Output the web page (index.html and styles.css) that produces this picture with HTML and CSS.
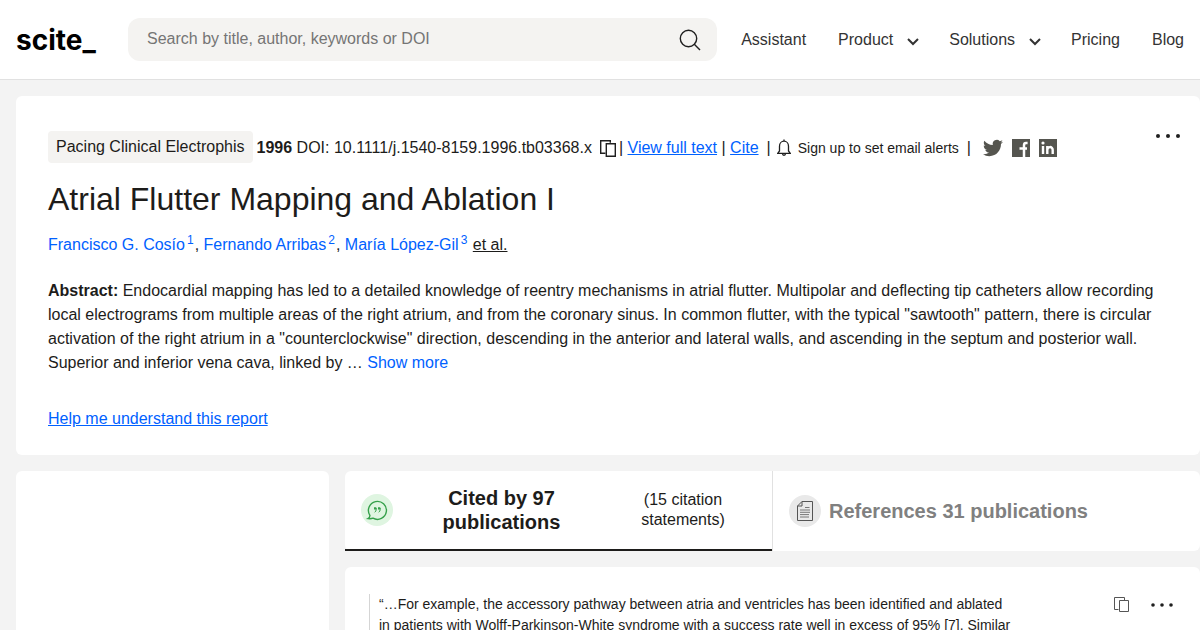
FILE: index.html
```html
<!DOCTYPE html>
<html lang="en">
<head>
<meta charset="utf-8">
<title>Atrial Flutter Mapping and Ablation I - scite</title>
<link rel="stylesheet" href="styles.css">
</head>
<body>
<header class="header">
  <a class="logo" href="#">scite_</a>
  <form class="search">
    <input class="search-input" type="text" aria-label="Search" placeholder="Search by title, author, keywords or DOI">
    <button class="icon-button" type="button" aria-label="Search">
      <svg width="22" height="22" viewBox="0 0 22 22" fill="none" stroke="#1f1f1f" stroke-width="1.4"><circle cx="9.5" cy="9.5" r="8.2"/><path d="M15.3 15.3L21 21"/></svg>
    </button>
  </form>
  <nav class="nav">
    <a href="#">Assistant</a>
    <button class="nav-menu" type="button">Product <svg width="12" height="8" viewBox="0 0 12 8" fill="none" stroke="#333" stroke-width="2"><path d="M1 1l5 5 5-5"/></svg></button>
    <button class="nav-menu" type="button">Solutions <svg width="12" height="8" viewBox="0 0 12 8" fill="none" stroke="#333" stroke-width="2"><path d="M1 1l5 5 5-5"/></svg></button>
    <a href="#">Pricing</a>
    <a href="#">Blog</a>
  </nav>
</header>
<main class="page">
  <section class="card report">
    <div class="report-top">
      <div class="meta">
        <span class="journal">Pacing Clinical Electrophis</span>
        <span class="doi"><b>1996</b> DOI: 10.1111/j.1540-8159.1996.tb03368.x</span>
        <button class="icon-button copy" type="button" aria-label="Copy DOI">
          <svg width="17" height="17" viewBox="0 0 17 17" fill="none" stroke="#1f1f1f" stroke-width="1.4"><path d="M5.500 13.300H.7V.7h9.600v2"/><path d="M6.300 3.700h9v12.600h-9z"/></svg>
        </button>
        <span class="links">| <a href="#">View full text</a> | <a href="#">Cite</a></span>
        <span class="bar">|</span>
        <button class="alerts" type="button">
          <svg width="14" height="18" viewBox="0 0 14 18" fill="none" stroke="#1f1f1f" stroke-width="1.3"><path d="M.7 14.300h12.600L11.500 12V7.200a4.500 5 0 0 0-9 0V12zM7 .5v2M5.500 14.500a1.500 1.800 0 0 0 3 0"/></svg>
          Sign up to set email alerts
        </button>
        <span class="bar">|</span>
        <span class="social">
          <a href="#" aria-label="Twitter"><svg width="20" height="20" viewBox="0 0 24 24" fill="#55554f"><path d="M23.950 4.570a10 10 0 0 1-2.820.77 4.960 4.960 0 0 0 2.160-2.720c-.95.56-2 .96-3.130 1.180a4.920 4.920 0 0 0-8.380 4.480C7.690 8.100 4.070 6.130 1.640 3.160a4.820 4.820 0 0 0-.67 2.480c0 1.710.87 3.210 2.190 4.100a4.900 4.900 0 0 1-2.230-.62v.06a4.920 4.920 0 0 0 3.950 4.830 5 5 0 0 1-2.210.08 4.940 4.940 0 0 0 4.600 3.420A9.870 9.870 0 0 1 0 19.540a13.990 13.990 0 0 0 7.560 2.210c9.050 0 14-7.500 14-13.980 0-.21 0-.42-.02-.63a9.940 9.940 0 0 0 2.410-2.570z"/></svg></a>
          <a href="#" aria-label="Facebook"><svg width="18" height="18" viewBox="0 0 18 18"><path fill="#55554f" d="M0 0h18v18H0z"/><path d="M15.600 4h-1.600c-1.500 0-2 .8-2 2.200V18M7.500 9.500h7.500" fill="none" stroke="#fff" stroke-width="2.500"/></svg></a>
          <a href="#" aria-label="LinkedIn"><svg width="18" height="18" viewBox="0 0 18 18"><path fill="#55554f" d="M0 0h18v18H0z"/><path d="M4 7v8M8.300 7v8M8.300 11c0-3.800 5.400-4 5.400 0v4" fill="none" stroke="#fff" stroke-width="2.400"/><circle cx="4" cy="4" r="1.600" fill="#fff"/></svg></a>
        </span>
      </div>
      <button class="icon-button more" type="button" aria-label="More options">
        <svg width="26" height="6" viewBox="0 0 26 6" fill="#1f1f1f"><circle cx="3" cy="3" r="2"/><circle cx="13" cy="3" r="2"/><circle cx="23" cy="3" r="2"/></svg>
      </button>
    </div>
    <h1 class="title">Atrial Flutter Mapping and Ablation I</h1>
    <p class="authors"><a href="#">Francisco G. Cosío<sup>1</sup></a>, <a href="#">Fernando Arribas<sup>2</sup></a>, <a href="#">María López-Gil<sup>3</sup></a> <button class="et-al" type="button">et al.</button></p>
    <p class="abstract"><b>Abstract:</b> Endocardial mapping has led to a detailed knowledge of reentry mechanisms in atrial flutter. Multipolar and deflecting tip catheters allow recording local electrograms from multiple areas of the right atrium, and from the coronary sinus. In common flutter, with the typical "sawtooth" pattern, there is circular activation of the right atrium in a "counterclockwise" direction, descending in the anterior and lateral walls, and ascending in the septum and posterior wall. Superior and inferior vena cava, linked by … <a class="show-more" href="#">Show more</a></p>
    <a class="help" href="#">Help me understand this report</a>
  </section>
  <div class="columns">
    <aside class="card"></aside>
    <div class="content">
      <div class="tabs">
        <button class="tab active" type="button">
          <svg width="32" height="32" viewBox="0 0 32 32" fill="none"><circle cx="16" cy="16" r="16" fill="#dff5e1"/><path d="M8.900 21.300A9 9 0 1 1 12 24.200Q10 25 7 24.600Q9 23.500 8.900 21.300z" stroke="#35a04a" stroke-width="1.400"/><path d="M13 14h2.200v1.500q0 1.800-1.500 2.800M17 14h2.200v1.500q0 1.800-1.500 2.800" stroke="#35a04a" stroke-width="1"/><path d="M13 13.500h2.200v2H13zM17 13.500h2.200v2H17z" fill="#35a04a"/></svg>
          <strong class="tab-title">Cited by 97 publications</strong>
          <span class="tab-note">(15 citation statements)</span>
        </button>
        <button class="tab" type="button">
          <svg width="32" height="32" viewBox="0 0 32 32" fill="none"><circle cx="16" cy="16" r="16" fill="#e9e9e9"/><path d="M13 6.500h10.500v19h-15V11zM13 6.500V11H8.500" stroke="#555" stroke-linejoin="round"/><path d="M16 12.500h4.500M11 15h10M11 17.300h10M11 19.600h9M11 22h9" stroke="#777"/></svg>
          <strong>References 31 publications</strong>
        </button>
      </div>
      <article class="card citation">
        <blockquote class="quote">“…For example, the accessory pathway between atria and ventricles has been identified and ablated in patients with Wolff-Parkinson-White syndrome with a success rate well in excess of 95% [7]. Similar</blockquote>
        <div class="actions">
          <button class="icon-button" type="button" aria-label="Copy statement">
            <svg width="17" height="16" viewBox="0 0 17 16" fill="none" stroke="#555"><path d="M5.500 12.500h-4v-12h10v3"/><path d="M6.500 3.500h9v11h-9z"/></svg>
          </button>
          <button class="icon-button" type="button" aria-label="More options">
            <svg width="24" height="6" viewBox="0 0 24 6" fill="#1f1f1f"><circle cx="3" cy="3" r="1.800"/><circle cx="12" cy="3" r="1.800"/><circle cx="21" cy="3" r="1.800"/></svg>
          </button>
        </div>
      </article>
    </div>
  </div>
</main>
</body>
</html>
```
FILE: styles.css
```css
* { box-sizing: border-box; }
body {
  margin: 0;
  background: #f3f3f3;
  color: #1d1c1a;
  font: 16px/24px "Liberation Sans", Arial, sans-serif;
}
button {
  padding: 0;
  border: 0;
  background: none;
  color: inherit;
  font: inherit;
  cursor: pointer;
}
svg { display: block; flex: none; }
a { color: #0061ff; }

.header {
  display: flex;
  align-items: center;
  height: 80px;
  padding: 0 16px;
  background: #fff;
  border-bottom: 1px solid #e1e1e1;
}
.logo {
  width: 112px;
  color: #000;
  font: 700 28px/32px Inter, sans-serif;
  text-decoration: none;
}
.search {
  flex: 1;
  display: flex;
  align-items: center;
  height: 43px;
  margin-right: 24px;
  padding: 0 16px 0 19px;
  background: #f4f3f1;
  border-radius: 12px;
}
.search-input {
  flex: 1;
  min-width: 0;
  padding: 0 0 2px;
  border: 0;
  outline: 0;
  background: none;
  font: inherit;
}
.search-input::placeholder { color: #757575; }
.nav {
  display: flex;
  align-items: center;
  gap: 32px;
  color: #333;
}
.nav a { color: inherit; text-decoration: none; }
.nav-menu { display: flex; align-items: center; gap: 14px; margin-right: -2px; }
.nav-menu svg { margin-top: 4px; }

.page { padding: 16px 0 16px 16px; }
.card { background: #fff; border-radius: 6px; }
.report { padding: 32px 32px 24px; }
.report-top { display: flex; justify-content: space-between; align-items: flex-start; }
.meta { display: flex; align-items: center; padding-top: 3px; white-space: nowrap; }
.meta > * { padding-top: 2px; }
.meta > .journal {
  padding: 4px 8px;
  margin-right: 4px;
  background: #f4f3f1;
  border-radius: 4px;
}
.copy { margin: 0 2px 0 8px; }
.bar { margin: 0 8px; }
.alerts { display: flex; align-items: center; gap: 7px; margin-left: -2px; font-size: 14px; }
.social { display: flex; align-items: center; gap: 9px; margin-left: 4px; }
.more { margin: 5px -13px 0 0; }
.title { margin: 16px 0 14px; font-size: 32px; line-height: 40px; font-weight: 400; }
.authors { margin: 0 0 22px; line-height: 24px; }
.authors a { text-decoration: none; }
.authors sup { margin: 0 1px 0 2px; font-size: 12px; line-height: 0; }
.et-al { text-decoration: underline; }
.abstract { margin: 0 0 32px; }
.show-more { text-decoration: none; }

.columns {
  display: grid;
  grid-template-columns: 313px 1fr;
  gap: 16px;
  margin-top: 16px;
}
.content { display: grid; gap: 16px; }
.tabs { display: flex; background: #fff; border-radius: 6px; }
.tab {
  flex: 1;
  display: flex;
  align-items: center;
  gap: 8px;
  min-height: 80px;
  padding: 0 16px;
  border-left: 1px solid #e1e1e1;
  color: #808080;
  font-size: 20px;
}
.active {
  border-left: 0;
  border-bottom: 2px solid #1d1c1a;
  color: #1d1c1a;
}
.tab-title { flex: 1; padding: 0 32px; }
.tab-note { flex: none; width: 146px; padding: 0 24px; font-size: 16px; line-height: 20px; }
.citation { display: flex; justify-content: space-between; padding: 27px 24px 24px; }
.quote {
  max-width: 648px;
  margin: 0;
  padding-left: 9px;
  border-left: 1px solid #d5d5d5;
  font-size: 14px;
  line-height: 21px;
}
.actions { display: flex; align-items: center; gap: 20px; height: 21px; margin-right: 2px; }
```
